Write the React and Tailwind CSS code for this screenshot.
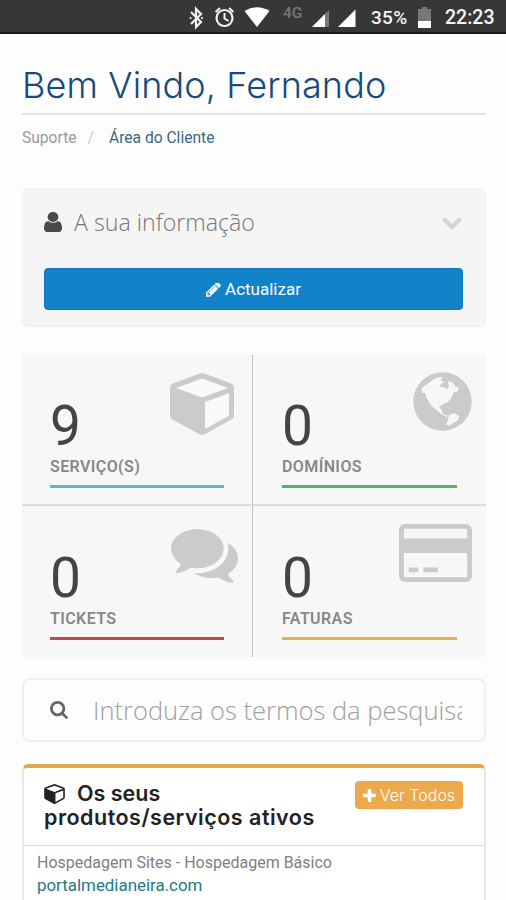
import React from "react";

const paths = {
  user: "M1536 1399q0 109-62.5 187t-150.5 78h-854q-88 0-150.5-78t-62.5-187q0-85 8.5-160.5t31.5-152 58.5-131 94-89 134.5-34.5q131 128 313 128t313-128q76 0 134.5 34.5t94 89 58.5 131 31.5 152 8.5 160.5zm-256-887q0 159-112.5 271.5t-271.5 112.5-271.5-112.5-112.5-271.5 112.5-271.5 271.5-112.5 271.5 112.5 112.5 271.5z",
  chevron: "M1683 808l-742 741q-19 19-45 19t-45-19l-742-741q-19-19-19-45.5t19-45.5l166-165q19-19 45-19t45 19l531 531 531-531q19-19 45-19t45 19l166 165q19 19 19 45.5t-19 45.5z",
  pencil: "M491 1536l91-91-235-235-91 91v107h128v128h107zm523-928q0-22-22-22-10 0-17 7l-542 542q-7 7-7 17 0 22 22 22 10 0 17-7l542-542q7-7 7-17zm-54-192l416 416-832 832h-416v-416zm683 96q0 53-37 90l-166 166-416-416 166-165q36-38 90-38 53 0 91 38l235 234q37 39 37 91z",
  comments: "M1408 768q0 139-94 257t-256.5 186.5-353.5 68.5q-86 0-176-16-124 88-278 128-36 9-86 16h-3q-11 0-20.5-8t-11.5-21q-1-3-1-6.5t.5-6.5 2-6l2.5-5 3.5-5.5 4-5 4.5-5 4-4.5q5-6 23-25t26-29.5 22.5-29 25-38.5 20.5-44q-124-72-195-177t-71-224q0-139 94-257t256.5-186.5 353.5-68.5 353.5 68.5 256.5 186.5 94 257zm384 256q0 120-71 224.5t-195 176.5q10 24 20.5 44t25 38.5 22.5 29 26 29.5 23 25q1 1 4 4.5t4.5 5 4 5 3.5 5.5l2.5 5 2 6 .5 6.5-1 6.5q-3 14-13 22t-22 7q-50-7-86-16-154-40-278-128-90 16-176 16-271 0-472-132 58 4 88 4 161 0 309-45t264-129q125-92 192-212t67-257q0-77-23-152 129 71 204 178t75 230z",
  card: "M1760 128q66 0 113 47t47 113v1216q0 66-47 113t-113 47h-1600q-66 0-113-47t-47-113v-1216q0-66 47-113t113-47h1600zm-1600 128q-13 0-22.5 9.5t-9.5 22.5v224h1664v-224q0-13-9.5-22.5t-22.5-9.5h-1600zm1600 1280q13 0 22.5-9.5t9.5-22.5v-608h-1664v608q0 13 9.5 22.5t22.5 9.5h1600zm-1504-128v-128h256v128h-256zm384 0v-128h384v128h-384z",
  search: "M1216 832q0-185-131.5-316.5t-316.5-131.5-316.5 131.5-131.5 316.5 131.5 316.5 316.5 131.5 316.5-131.5 131.5-316.5zm512 832q0 52-38 90t-90 38q-54 0-90-38l-343-342q-179 124-399 124-143 0-273.5-55.5t-225-150-150-225-55.5-273.5 55.5-273.5 150-225 225-150 273.5-55.5 273.5 55.5 225 150 150 225 55.5 273.5q0 220-124 399l343 343q37 37 37 90z",
  plus: "M1600 736v192q0 40-28 68t-68 28h-416v416q0 40-28 68t-68 28h-192q-40 0-68-28t-28-68v-416h-416q-40 0-68-28t-28-68v-192q0-40 28-68t68-28h416v-416q0-40 28-68t68-28h192q40 0 68 28t28 68v416h416q40 0 68 28t28 68z",
};

function Icon({ name, box, className }) {
  return (
    <svg viewBox={box} preserveAspectRatio="none" fill="currentColor" className={className}>
      <path d={paths[name]} />
    </svg>
  );
}

function Cube({ className, face }) {
  return (
    <svg viewBox="0 0 64 62" className={className}>
      <path d="M29 .8q3-1.200 6 0l26 9.700q3 1.200 3 4.500v27q0 3-2.500 4.500L35 61q-3 1.500-6 0L2.500 46.500Q0 45 0 42V15q0-3.300 3-4.500z" fill="currentColor" />
      <path d="M32 5.500 58 15 32 24.500 6 15zM35 29l24-8.800v22.500L35 56z" fill={face} />
    </svg>
  );
}

function Globe({ className }) {
  return (
    <svg viewBox="0 0 59 59" className={className}>
      <circle cx="29.500" cy="29.500" r="29.200" fill="currentColor" />
      <g fill="#f7f7f7">
        <path d="M9 16l4-3 5-4 5-3 6-1-1 4 4 1-4 2-1 3 4 0 3 2 2-3-1-3 1-2 4 2 2 3 4 2-2 4-3 0-2 5-4 5-5 2-4 3 3 3 1 4 5 2-2 1-6-4-6-5-3-3-4-6-2-6-3 0z" />
        <path d="M36 43l5-2 5 3-1 4-5 3-4 3-3-2 2-4z" />
      </g>
    </svg>
  );
}

function StatusBar() {
  return (
    <div className="flex h-[34px] items-start border-b-2 border-[#171717] bg-[#373737] pl-[188px] font-[Roboto] text-[#f4f4f4]">
      <svg viewBox="0 0 170 32" className="h-8 w-[170px]" fill="none">
        <path d="M3 12l10 10-5 5V9l5 5L3 24" stroke="#f2f2f2" strokeWidth="2.200" />
        <path d="M2.500 18h.1M14 18h.1" stroke="#f2f2f2" strokeWidth="2" strokeLinecap="round" />
        <circle cx="36.500" cy="18" r="8" stroke="#f2f2f2" strokeWidth="2.200" />
        <path d="M36.500 13v5.500l4 2.500M27.500 12l4.500-4M45.500 12L41 8" stroke="#f2f2f2" strokeWidth="2" />
        <path d="M56.500 11Q69 3.500 81.500 11L69 27z" fill="#fff" />
        <text x="95" y="18" fill="#777" fontSize="15.500" fontWeight="500">4G</text>
        <path d="M141 10v17h-17z" fill="#777" />
        <path d="M137 14v13h-13z" fill="#fff" />
        <path d="M167.500 9.500V27H150z" fill="#fff" />
      </svg>
      <span className="ml-[13px] w-[37px] text-[19px] font-medium leading-[36px] tracking-[0.3px]">35%</span>
      <svg viewBox="0 0 13 22" className="ml-[10px] mt-[7px] h-[22px] w-[13px]">
        <path d="M4 0h5v2h4v13H0V2h4z" fill="#777" />
        <path d="M0 14h13v7H0z" fill="#fff" />
      </svg>
      <span className="ml-[14px] text-[19.500px] font-medium leading-[36px]">22:23</span>
    </div>
  );
}

function Stat({ value, label, line, icon, className }) {
  return (
    <div className={`relative ${className}`}>
      <div className="text-[55px] leading-[64px] tracking-[-1px] text-[#444]">{value}</div>
      <div className="text-[16px] font-semibold leading-[18px] tracking-[0.4px] text-[#888]">{label}</div>
      <div className={`mt-[9px] h-[3px] ${line}`} />
      {icon}
    </div>
  );
}

function Stats() {
  return (
    <div className="mt-7 grid h-[302px] grid-cols-[231px_233px] grid-rows-[151px_151px] bg-[#f7f7f7]">
      <Stat
        value="9"
        label="SERVIÇO(S)"
        line="bg-[#5bb5d0]"
        className="border-b-2 border-r border-b-[#dcdcdc] border-r-[#c4c4c4] pl-7 pr-[28px] pt-[39px]"
        icon={<Cube face="#f9f9f9" className="absolute left-[148px] top-[18px] h-[62px] w-16 text-[#cbcbcb]" />}
      />
      <Stat
        value="0"
        label="DOMÍNIOS"
        line="bg-[#5cb160]"
        className="border-b-2 border-[#dcdcdc] pl-[29px] pr-[29px] pt-[39px]"
        icon={<Globe className="absolute left-[160px] top-[17px] size-[59px] text-[#cbcbcb]" />}
      />
      <Stat
        value="0"
        label="TICKETS"
        line="bg-[#c24a4e]"
        className="border-r border-[#c4c4c4] pl-7 pr-[28px] pt-[40px]"
        icon={<Icon name="comments" box="0 256 1792 1408" className="absolute left-[149px] top-[23px] h-[54px] w-[67px] text-[#cbcbcb]" />}
      />
      <Stat
        value="0"
        label="FATURAS"
        line="bg-[#e3b05b]"
        className="pl-[29px] pr-[29px] pt-[40px]"
        icon={<Icon name="card" box="0 128 1920 1536" className="absolute left-[146px] top-[18px] h-[58px] w-[73px] text-[#cbcbcb]" />}
      />
    </div>
  );
}

function App() {
  return (
    <div className="h-[900px] overflow-hidden bg-[#fdfdfd] font-[Roboto]">
      <StatusBar />
      <div className="pl-[22px] pr-5">
        <h1 className="h-[81px] whitespace-nowrap border-b-2 border-[#e4e4e4] pt-[27px] font-[Inter] text-[36px] font-light leading-[48px] tracking-[0.13px] text-[#164a7d]">
          Bem Vindo, Fernando
        </h1>
        <div className="mt-3 flex h-[21px] text-[15.600px] leading-[22px] text-[#999]">
          <span>Suporte</span>
          <span className="ml-[11px] text-[#ccc]">/</span>
          <span className="ml-[15px] text-[#3b6780]">Área do Cliente</span>
        </div>

        <div className="mt-10 h-[139px] rounded-md border border-[#f0f0f0] bg-[#f5f5f5] px-[21px] pt-[18px]">
          <div className="flex h-8 items-center">
            <Icon name="user" box="256 128 1280 1536" className="-mt-0.5 h-5 w-[18px] text-[#4a4a4a]" />
            <span className="-mt-0.5 ml-3 font-['Open_Sans'] text-[23.200px] font-light leading-8 text-[#777]">A sua informação</span>
            <Icon name="chevron" box="90 533 1612 1035" className="ml-auto mr-0.5 h-[13px] w-5 text-[#d5d5d5]" />
          </div>
          <button className="mt-[29px] flex h-[42px] w-[419px] items-center justify-center rounded border border-[#0f76b8] bg-[#1282c9] pt-0.5 text-[17px] text-white">
            <Icon name="pencil" box="128 256 1536 1536" className="mr-1 size-[15px]" />
            Actualizar
          </button>
        </div>

        <Stats />

        <div className="mt-[21px] flex h-16 items-center rounded-lg border-2 border-[#efefef] pl-[26px] pr-[22px]">
          <Icon name="search" box="64 128 1664 1664" className="size-[18px] shrink-0 text-[#666]" />
          <span className="ml-[25px] w-[369px] overflow-hidden whitespace-nowrap font-['Open_Sans'] text-[25.500px] font-light leading-9 text-[#a0a0a0]">
            Introduza os termos da pesquisa
          </span>
        </div>

        <div className="mt-[22px] h-[160px] w-[464px] rounded-t-md border-x-2 border-t-4 border-x-[#e8e8e8] border-t-[#e5a64c] bg-white">
          <div className="flex h-[78px] justify-between border-b border-[#d9d9d9] pl-5 pr-[21px] pt-[13px]">
            <h3 className="whitespace-nowrap font-[Inter] text-[21.500px] font-semibold leading-6 text-[#222]">
              <Cube face="#fff" className="mr-3 inline-block h-5 w-[21px] align-[-3px]" />
              <span>Os seus</span>
              <br />
              <span className="tracking-[0.5px]">produtos/serviços ativos</span>
            </h3>
            <button className="flex h-7 w-[108px] shrink-0 items-center justify-center whitespace-nowrap rounded bg-[#edaa4d] font-[Inter] text-[16px] font-light text-white">
              <Icon name="plus" box="192 128 1408 1408" className="mr-1 size-[13px]" />
              Ver Todos
            </button>
          </div>
          <div className="pl-[13px] pt-[5px] text-[16px] leading-[23px] text-[#808080]">
            <div>Hospedagem Sites - Hospedagem Básico</div>
            <div className="text-[16.900px] text-[#1c7b86]">portalmedianeira.com</div>
          </div>
        </div>
      </div>
    </div>
  );
}

export default App;
